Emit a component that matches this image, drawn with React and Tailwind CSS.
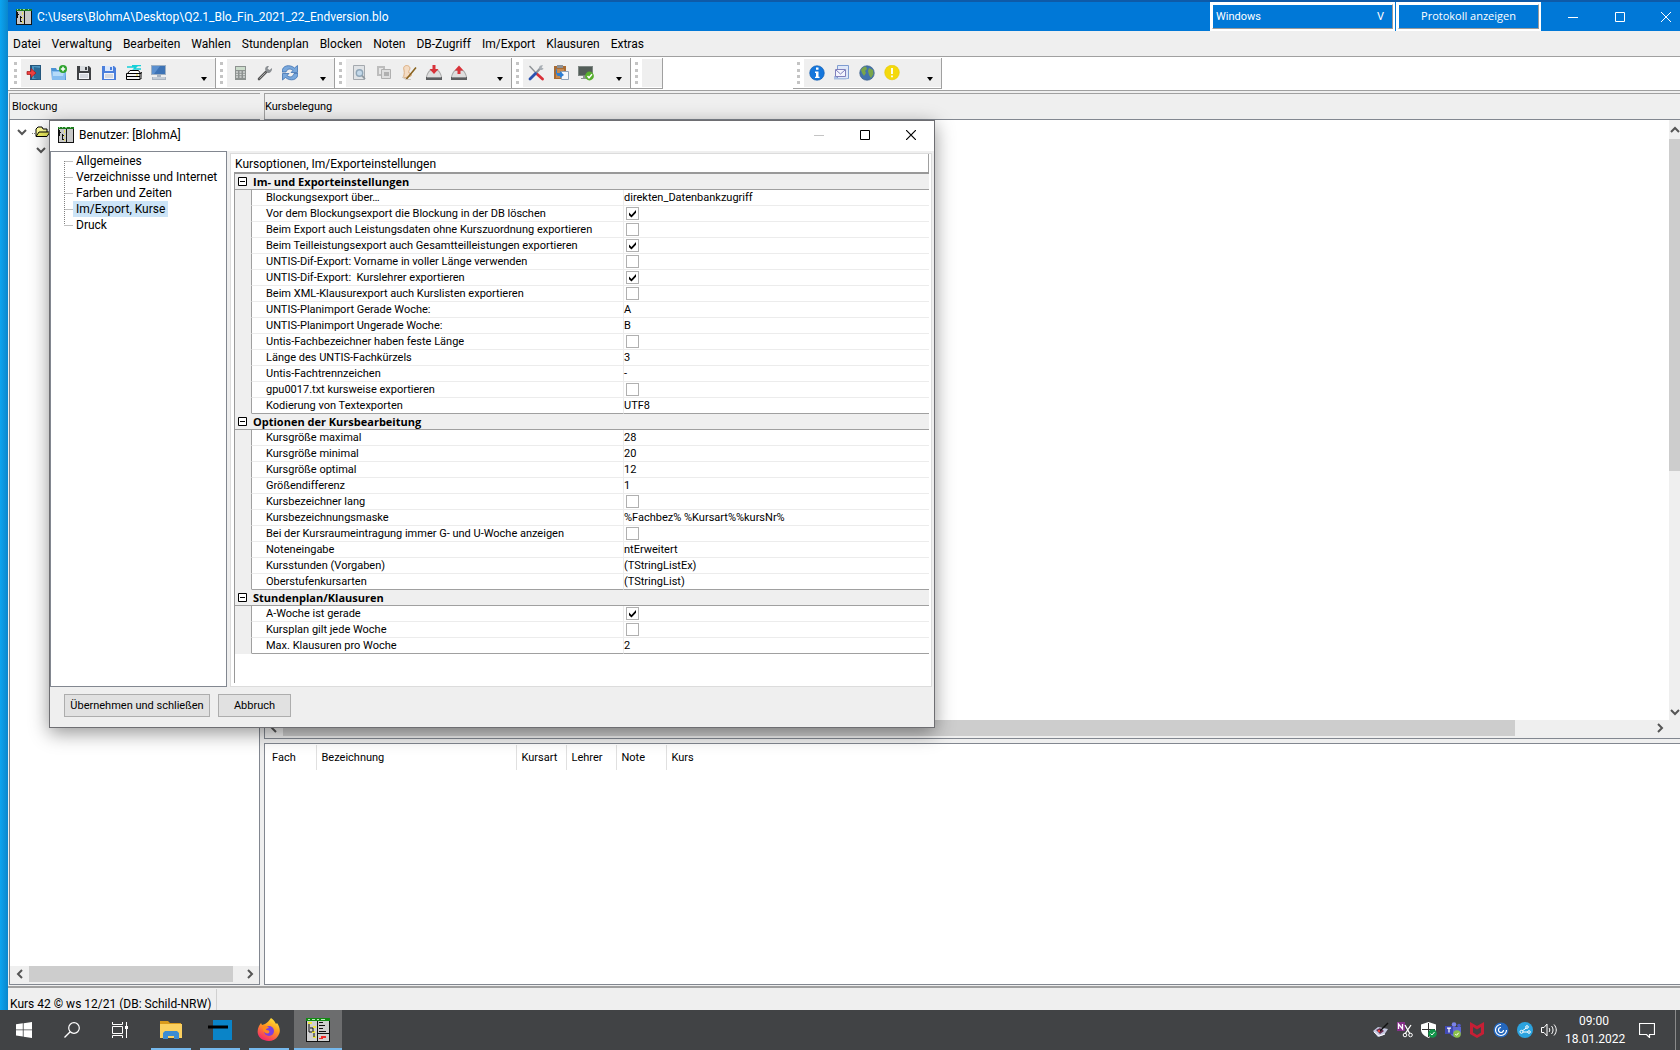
import React from "react";

const Svg = ({ size = 16, box = "0 0 16 16", children, className = "" }) => (
  <svg
    className={"shrink-0 " + className}
    width={size}
    height={size}
    viewBox={box}
    fill="none"
    aria-hidden="true"
  >
    {children}
  </svg>
);

const AppIcon = ({ size = 16 }) => (
  <Svg size={size}>
    <path d="M0 0h16v16H0z" fill="#111" />
    <path d="M1 2h7v13H1zM9 2h6v13H9z" fill="#c8c8c8" />
    <path d="M0 0h16v2H0z" fill="#1f7a1f" />
    <path d="M1 0h1v1H1zM4 0h1v1H4zM7 0h2v1H7zM12 0h1v1h-1z" fill="#8fe08f" />
    <path d="M6 3h1v3H6zM6 8h1v2H6zM6 12h1v2H6zM1 3h1v2H1z" fill="#e8e060" />
    <path d="M1 3h1v6H1zM1 5h2v1H1zM4 7h1v6H4zM4 8h2v1H4zM4 12h2v1H4z" fill="#111" />
  </Svg>
);

const AppIconLarge = () => (
  <Svg size={24} box="0 0 24 24">
    <path d="M0 0h24v24H0z" fill="#111" />
    <path d="M1 3h10v20H1zM12 3h11v20H12z" fill="#d0d0d0" />
    <path d="M0 0h24v3H0z" fill="#128a12" />
    <path d="M2 1h2v1H2zM6 1h3v1H6zM11 1h2v1h-2zM15 1h4v1h-4z" fill="#b8f0b8" />
    <path d="M2 4h4v2H2zM7 8h3v2H7zM6 13h3v2H6zM7 18h3v2H7z" fill="#eee83c" />
    <path d="M3 6v8h3M7 10v4M4 10h3M8 15v4" stroke="#111" />
    <path d="M13 4.5h4M13 7.5h6M13 10.5h4M13 13.5h7" stroke="#111" />
    <path d="M12 15.5h11" stroke="#111" />
    <path d="M15 18h5v2h-3v1h-4v-1h2z" fill="#f02828" />
  </Svg>
);

const ExitIcon = () => (
  <Svg>
    <path d="M4 0h11v15H4z" fill="#24567c" />
    <path d="M6 1h8v13H6z" fill="#4d94c0" />
    <path d="M8 2l6 1v12l-6-2z" fill="#2b6c98" />
    <path d="M1 6.500h4V3.500L10 8l-5 4.500v-3H1z" fill="#ee4040" stroke="#a01818" strokeWidth=".7" />
  </Svg>
);
const FolderAddIcon = () => (
  <Svg>
    <path d="M0 3h5l1 2h9v10H1z" fill="#4b92d4" />
    <path d="M1 6h14l-1 9H1z" fill="#86bdf0" />
    <path d="M2 7h11l-1 4H2z" fill="#b5daf9" />
    <circle cx="12" cy="4" r="4" fill="#2fa32f" />
    <path d="M12 1.800v4.400M9.800 4h4.400" stroke="#fff" strokeWidth="1.500" />
  </Svg>
);
const SaveIcon = ({ main, light }) => (
  <Svg>
    <path d="M1 1h12l2 2v12H1z" fill={main} />
    <path d="M4 1h8v5H4z" fill={light} />
    <path d="M9 2h2v3H9z" fill={main} />
    <path d="M3 8h10v6H3z" fill="#f2f4f8" />
    <path d="M4 10h8M4 12h8" stroke="#b7bcc4" />
  </Svg>
);
const PrinterIcon = () => (
  <Svg>
    <path d="M1 2h9l-2 2h7M6 .5h9" stroke="#16d0d8" strokeWidth="1.500" />
    <path d="M4 5.500h8.500l2 3H1.500z" fill="#fff" stroke="#000" />
    <path d="M.5 8.500h13.500v6H.5z" fill="#f2f2f2" stroke="#000" />
    <path d="M14 8.500l2-1v5l-2 2" stroke="#000" />
    <path d="M1 11.500h13" stroke="#000" />
    <path d="M10 10h2" stroke="#e5d430" />
  </Svg>
);
const MonitorIcon = () => (
  <Svg>
    <path d="M0 0h15v10H0z" fill="#9fb0c2" />
    <path d="M1 1h13v8H1z" fill="#3d73b6" />
    <path d="M1 1h8L3 9H1z" fill="#5b90cf" />
    <path d="M6 10h4v2H6zM1 12h14v3H1z" fill="#a8b3c0" />
    <path d="M2 13h12" stroke="#e0e6ec" />
  </Svg>
);
const CalcIcon = () => (
  <Svg>
    <path d="M3 1h11v14H3z" fill="#8d9290" />
    <path d="M4 2h9v3H4z" fill="#cbdccb" />
    <path d="M4 7h2M7.500 7h2M11 7h2M4 9.500h2M7.500 9.500h2M11 9.500h2M4 12h2M7.500 12h2M11 12h2" stroke="#d5d8d6" strokeWidth="1.500" />
  </Svg>
);
const WrenchIcon = () => (
  <Svg>
    <path d="M2 14l7-7" stroke="#555" strokeWidth="2.600" strokeLinecap="round" />
    <path d="M15 3l-2.500 2-2-1.500L12 1C9 .500 7.500 3 8.500 5.500L10.500 8C13 8.500 15.500 6 15 3z" fill="#8b8f93" />
    <path d="M2.500 13.500l6-6" stroke="#bbb" strokeWidth=".8" />
  </Svg>
);
const RefreshIcon = () => (
  <Svg>
    <path d="M0 7C0 0 8-1 12.500 3L15.500.5V7.500H9l2-2C8 3 5 4 4 7z" fill="#79a8dc" stroke="#2f66ab" strokeWidth=".7" />
    <path d="M16 8.500c0 7-8 8-12.500 4L.5 15V8.500H7l-2 2c3 2.500 6 1.500 7-2z" fill="#79a8dc" stroke="#2f66ab" strokeWidth=".7" />
  </Svg>
);
const PreviewIcon = () => (
  <Svg>
    <path d="M2.500.5h11v14h-11z" fill="#e0e3e6" stroke="#a4a9ae" />
    <circle cx="8.500" cy="8" r="3.200" fill="#c4d9ea" stroke="#8fa6b8" strokeWidth="1.400" />
    <path d="M11 10.500l3 3.500" stroke="#8f989f" strokeWidth="1.800" />
  </Svg>
);
const CopyIcon = () => (
  <Svg>
    <path d="M1 1h8v10H1z" fill="#bdbdbd" />
    <path d="M3 3h4v6H3z" fill="#e6e6e6" />
    <path d="M5.500 4.500h9v9h-9z" fill="#dedede" stroke="#b0b0b0" />
    <path d="M8 7h5v4H8z" fill="#b0b0b0" />
  </Svg>
);
const QuillIcon = () => (
  <Svg>
    <path d="M3 5C1 0 8-1 9 3c0 2-2 3-1 5 2 0 3 2 2 3l-7 2c-1-2 1-4 0-8z" fill="#f4dcc4" stroke="#dcae80" />
    <path d="M15 2.500L8 11l-3 3.500" stroke="#8a6420" strokeWidth="1.600" />
    <path d="M1 12l4 2.500h5" stroke="#d0c8c0" />
  </Svg>
);
const DriveIcon = ({ up }) => (
  <Svg>
    <path d="M4 5h8c2 1 4 5 4 8H0c0-3 2-7 4-8z" fill="#a9a9a9" />
    <path d="M4.500 6h7c2 1 3 4 3.500 6H1c.5-2 1.500-5 3.500-6z" fill="#dedede" />
    <path d="M0 12h16v3H0z" fill="#5c5e60" />
    <path d="M1 12h14v1H1z" fill="#8a8c8e" />
    <path d={up ? "M6.500 9V5.500H3.500L8 .5l4.500 5H9.500V9z" : "M6.500 0v4H3.500L8 9l4.500-5H9.500V0z"} fill="#d8333a" />
  </Svg>
);
const ToolsIcon = () => (
  <Svg>
    <path d="M1.500 1l7 7.500" stroke="#8e9296" strokeWidth="1.400" />
    <path d="M9 9l5.500 5" stroke="#d93038" strokeWidth="2.800" strokeLinecap="round" />
    <path d="M13 2.500L8 8" stroke="#8d949c" strokeWidth="2.200" />
    <path d="M11 2.500C11.500.5 13.500 0 15 .5L13.500 2.500 15.500 3.500C15 5 13 5.500 11.500 4.500z" fill="#a9afb5" />
    <path d="M7.500 8.500L2 14" stroke="#2a52b0" strokeWidth="2.800" strokeLinecap="round" />
  </Svg>
);
const PasteIcon = () => (
  <Svg>
    <path d="M1 1h12v13H1z" fill="#a96b32" />
    <path d="M4 0h6v3H4z" fill="#8c9197" />
    <path d="M3 4h8v9H3z" fill="#c68a50" />
    <path d="M8.500 6.500h7v8h-7z" fill="#f5f8fb" stroke="#8da2b8" />
    <path d="M4 3v5h3V6l4 4-4 3v-2H5C3 10 2 6 4 3z" fill="#2d7fd4" />
  </Svg>
);
const ScreenOkIcon = () => (
  <Svg>
    <path d="M0 1h15v10H0z" fill="#7d8682" />
    <path d="M1 2h13v8H1z" fill="#525d58" />
    <path d="M5 11h4v2h2v1H3v-1h2z" fill="#8b9490" />
    <circle cx="11.500" cy="11" r="4.400" fill="#57b02d" />
    <path d="M9.500 11l1.500 1.800 3-3.500" stroke="#fff" strokeWidth="1.400" />
  </Svg>
);
const InfoIcon = () => (
  <Svg>
    <circle cx="8" cy="8" r="7.300" fill="#1577dc" stroke="#0c58ac" strokeWidth=".6" />
    <path d="M7 2.500h2.500v2.300H7zM6 6.500h3.500v5.200h1V13H6v-1.300h1V8H6z" fill="#fff" />
  </Svg>
);
const MailIcon = () => (
  <Svg>
    <path d="M3.500.5h11v13h-11z" fill="#dfe8f8" stroke="#7f9cd0" />
    <path d="M0 14.500h12l2.500-1.500H3v-2H0z" fill="#a9bfe2" />
    <path d="M1.500 4.500h10v7h-10z" fill="#f3f4fd" stroke="#8080bc" />
    <path d="M2 5l4.500 4L11 5" stroke="#8080bc" />
  </Svg>
);
const GlobeIcon = () => (
  <Svg>
    <circle cx="8" cy="8" r="7.300" fill="#4273ac" stroke="#3b5c84" strokeWidth=".6" />
    <path d="M2 5c1-2 3-3.500 5-3.500L8 4 6 6l1 2-2 3-2-3zM10 3l4 2 .5 4-2.500 4-2-3-1-4z" fill="#7aa64a" />
  </Svg>
);
const HintIcon = () => (
  <Svg>
    <circle cx="8" cy="7.500" r="7.300" fill="#f4d90c" stroke="#e5c900" strokeWidth=".6" />
    <path d="M8 3v6M8 10.500v1.800" stroke="#fff" strokeWidth="1.800" />
  </Svg>
);

const DropMark = () => (
  <svg width="6" height="4" viewBox="0 0 6 4" aria-hidden="true">
    <path d="M0 0h6L3 4z" fill="#000" />
  </svg>
);

const Band = ({ icons, drop, width, className = "" }) => (
  <div
    className={
      "flex h-[31px] shrink-0 items-stretch border-r border-b border-[#a0a0a0] bg-white pl-[4px] " +
      width +
      " " +
      className
    }
  >
    <div className="my-[4px] mr-[4px] w-0 border-l-3 border-dotted border-[#c4c4c4]" />
    <div className="mt-[1px] mb-[1px] flex grow items-center justify-between bg-[#efefef] pr-[8px] pl-[5px]">
      <div className="flex gap-[9px]">
        {icons.map(([name, icon]) => (
          <button key={name} type="button" aria-label={name} className="size-[16px]">
            {icon}
          </button>
        ))}
      </div>
      {drop && (
        <button type="button" aria-label="Weitere Schaltflächen" className="mt-[12px]">
          <DropMark />
        </button>
      )}
    </div>
  </div>
);

const Chevron = ({ dir }) => {
  const d = {
    left: "M7 1L3 5l4 4",
    right: "M3 1l4 4-4 4",
    up: "M1 7l4-4 4 4",
    down: "M1 3l4 4 4-4",
  }[dir];
  return (
    <svg width="10" height="10" viewBox="0 0 10 10" fill="none" aria-hidden="true">
      <path d={d} stroke="#555" strokeWidth="2" />
    </svg>
  );
};

const menu = [
  "Datei", "Verwaltung", "Bearbeiten", "Wahlen", "Stundenplan", "Blocken",
  "Noten", "DB-Zugriff", "Im/Export", "Klausuren", "Extras",
];

const bandA = [
  ["Beenden", <ExitIcon />],
  ["Öffnen", <FolderAddIcon />],
  ["Speichern", <SaveIcon main="#3f4144" light="#d9dcdf" />],
  ["Speichern unter", <SaveIcon main="#4a7fdc" light="#dbe8fb" />],
  ["Drucken", <PrinterIcon />],
  ["Bildschirm", <MonitorIcon />],
];
const bandB = [
  ["Rechner", <CalcIcon />],
  ["Werkzeug", <WrenchIcon />],
  ["Aktualisieren", <RefreshIcon />],
];
const bandC = [
  ["Vorschau", <PreviewIcon />],
  ["Kopieren", <CopyIcon />],
  ["Notiz", <QuillIcon />],
  ["Importieren", <DriveIcon />],
  ["Exportieren", <DriveIcon up />],
];
const bandD = [
  ["Einstellungen", <ToolsIcon />],
  ["Einfügen", <PasteIcon />],
  ["Prüfen", <ScreenOkIcon />],
];
const bandE = [
  ["Info", <InfoIcon />],
  ["Nachricht", <MailIcon />],
  ["Internet", <GlobeIcon />],
  ["Hinweis", <HintIcon />],
];

const groups = [
  {
    title: "Im- und Exporteinstellungen",
    rows: [
      ["Blockungsexport über…", "direkten_Datenbankzugriff"],
      ["Vor dem Blockungsexport die Blockung in der DB löschen", true],
      ["Beim Export auch Leistungsdaten ohne Kurszuordnung exportieren", false],
      ["Beim Teilleistungsexport auch Gesamtteilleistungen exportieren", true],
      ["UNTIS-Dif-Export: Vorname in voller Länge verwenden", false],
      ["UNTIS-Dif-Export:  Kurslehrer exportieren", true],
      ["Beim XML-Klausurexport auch Kurslisten exportieren", false],
      ["UNTIS-Planimport Gerade Woche:", "A"],
      ["UNTIS-Planimport Ungerade Woche:", "B"],
      ["Untis-Fachbezeichner haben feste Länge", false],
      ["Länge des UNTIS-Fachkürzels", "3"],
      ["Untis-Fachtrennzeichen", "-"],
      ["gpu0017.txt kursweise exportieren", false],
      ["Kodierung von Textexporten", "UTF8"],
    ],
  },
  {
    title: "Optionen der Kursbearbeitung",
    rows: [
      ["Kursgröße maximal", "28"],
      ["Kursgröße minimal", "20"],
      ["Kursgröße optimal", "12"],
      ["Größendifferenz", "1"],
      ["Kursbezeichner lang", false],
      ["Kursbezeichnungsmaske", "%Fachbez% %Kursart%%kursNr%"],
      ["Bei der Kursraumeintragung immer G- und U-Woche anzeigen", false],
      ["Noteneingabe", "ntErweitert"],
      ["Kursstunden (Vorgaben)", "(TStringListEx)"],
      ["Oberstufenkursarten", "(TStringList)"],
    ],
  },
  {
    title: "Stundenplan/Klausuren",
    rows: [
      ["A-Woche ist gerade", true],
      ["Kursplan gilt jede Woche", false],
      ["Max. Klausuren pro Woche", "2"],
    ],
  },
];

const CheckBox = ({ id, checked }) => (
  <span className="grid size-[13px]">
    <input
      id={id}
      type="checkbox"
      defaultChecked={checked}
      className="peer col-start-1 row-start-1 size-[13px] appearance-none border border-[#b0b0b0] bg-white"
    />
    <svg
      viewBox="0 0 13 13"
      className="pointer-events-none col-start-1 row-start-1 hidden size-[13px] peer-checked:block"
      aria-hidden="true"
    >
      <path d="M3 5.500l2.500 2.500L10 3v2.800L5.500 10.500 3 8.200z" fill="#000" />
    </svg>
  </span>
);

const PropertyTable = () => (
  <table className="w-full table-fixed border-separate border-spacing-0 text-[11px] leading-[14px]">
    <colgroup>
      <col className="w-[17px]" />
      <col className="w-[372px]" />
      <col />
    </colgroup>
    {groups.map((g, gi) => (
      <tbody key={g.title}>
        <tr className="h-[16px] bg-[#efefef]">
          <th colSpan={3} scope="colgroup" className="border-b border-[#a0a0a0] p-0 text-left">
            <button
              type="button"
              aria-expanded="true"
              className="flex h-[15px] items-center gap-[6px] pl-[3px] font-['Open_Sans',sans-serif] font-bold"
            >
              <svg width="9" height="9" viewBox="0 0 9 9" aria-hidden="true">
                <path d="M.5.500h8v8h-8z" fill="#fff" stroke="#000" />
                <path d="M2 4.500h5" stroke="#000" />
              </svg>
              {g.title}
            </button>
          </th>
        </tr>
        {g.rows.map(([label, value], i) => {
          const id = "opt-" + gi + "-" + i;
          const line = i === g.rows.length - 1 ? " border-b-[#a0a0a0]" : " border-b-[#ececec]";
          return (
            <tr key={label} className="h-[16px]">
              <td className={"border-r border-b border-r-[#a0a0a0] border-b-[#efefef] bg-[#efefef] p-0"} />
              <th
                scope="row"
                className={"border-r border-b border-r-[#ececec] p-0 pt-[1px] pl-[14px] text-left font-normal whitespace-pre" + line}
              >
                {typeof value === "boolean" ? <label htmlFor={id}>{label}</label> : label}
              </th>
              {typeof value === "boolean" ? (
                <td className={"border-b p-0 pl-[2px]" + line}>
                  <CheckBox id={id} checked={value} />
                </td>
              ) : (
                <td className={"border-b p-0 pt-[1px] whitespace-pre" + line}>{value}</td>
              )}
            </tr>
          );
        })}
      </tbody>
    ))}
  </table>
);

const tree = ["Allgemeines", "Verzeichnisse und Internet", "Farben und Zeiten", "Im/Export, Kurse", "Druck"];

const Dialog = () => (
  <section
    role="dialog"
    aria-label="Benutzer: [BlohmA]"
    className="absolute top-[120px] left-[49px] flex h-[608px] w-[886px] flex-col border border-[#6e6e72] bg-[#efefef] shadow-[0_5px_18px_rgba(0,0,0,0.42)]"
  >
    <header className="flex h-[30px] shrink-0 items-center bg-white pb-[2px] pl-[8px]">
      <AppIcon />
      <h2 className="ml-[5px] grow text-[12px]">Benutzer: [BlohmA]</h2>
      <button type="button" aria-label="Minimieren" disabled className="grid w-[46px] place-items-center">
        <svg width="10" height="10" viewBox="0 0 10 10"><path d="M0 5.500h10" stroke="#c4c4c4" /></svg>
      </button>
      <button type="button" aria-label="Maximieren" className="grid w-[46px] place-items-center">
        <svg width="10" height="10" viewBox="0 0 10 10" fill="none"><path d="M.5.500h9v9h-9z" stroke="#000" /></svg>
      </button>
      <button type="button" aria-label="Schließen" className="grid w-[46px] place-items-center">
        <svg width="10" height="10" viewBox="0 0 10 10"><path d="M0 0l10 10M10 0L0 10" stroke="#000" strokeWidth="1.200" /></svg>
      </button>
    </header>
    <div className="flex min-h-0 grow gap-[3px] pr-[2px]">
      <ul className="w-[177px] shrink-0 border border-[#828790] bg-white pt-[1px] pl-[13px]">
        {tree.map((t, i) => (
          <li key={t} className="flex h-[16px] items-center">
            <svg className="shrink-0" width="9" height="16" viewBox="0 0 9 16" aria-hidden="true">
              <path
                d={i === 0 ? "M.5 8v8M.5 8.500h9" : i === 4 ? "M.5 0v8M.5 8.500h9" : "M.5 0v16M.5 8.500h9"}
                stroke="#808080"
                strokeDasharray="1 1"
              />
            </svg>
            <button
              type="button"
              className={"h-[16px] px-[3px] text-[12px] leading-[16px] whitespace-nowrap " + (i === 3 ? "bg-[#cce4f7]" : "")}
            >
              {t}
            </button>
          </li>
        ))}
      </ul>
      <div className="mt-[2px] flex grow flex-col border border-[#dcdcdc] bg-white pr-[2px] pb-[3px] pl-[3px]">
        <h3 className="h-[18px] border-r border-[#a0a0a0] pt-[3px] pl-[1px] text-[12px] leading-[15px]">
          Kursoptionen, Im/Exporteinstellungen
        </h3>
        <div className="grow border-t-2 border-l border-[#999]">
          <PropertyTable />
        </div>
      </div>
    </div>
    <footer className="flex h-[40px] shrink-0 items-start gap-[8px] pt-[7px] pl-[14px] text-[11px]">
      <button type="button" className="h-[23px] w-[146px] border border-[#adadad] bg-[#e1e1e1] pt-[1px]">
        Übernehmen und schließen
      </button>
      <button type="button" className="h-[23px] w-[73px] border border-[#adadad] bg-[#e1e1e1] pt-[1px]">
        Abbruch
      </button>
    </footer>
  </section>
);

const Header = ({ children, className }) => (
  <h2 className={"h-[26px] border-t border-l border-[#a0a0a0] bg-[#efefef] pt-[4px] text-[11px] leading-[17px] " + className}>
    {children}
  </h2>
);

const MainWindow = () => (
  <main className="flex min-w-0 grow flex-col bg-[#efefef]">
    <header className="flex h-[31px] shrink-0 items-center border-t-2 border-[#0e5aa8] bg-[#0078d7] pl-[8px] text-[12px] text-white">
      <AppIcon />
      <h1 className="ml-[5px] grow">C:\Users\BlohmA\Desktop\Q2.1_Blo_Fin_2021_22_Endversion.blo</h1>
      <div className="mr-[1px] grid h-[29px] w-[185px] border-2 border-white bg-[#0078d7]">
        <select
          aria-label="Fenster"
          className="col-start-1 row-start-1 w-full appearance-none border border-[#9a9a9a] border-t-white border-l-white pt-[2px] pl-[3px] text-[11px]"
        >
          <option>Windows</option>
        </select>
        <span className="pointer-events-none col-start-1 row-start-1 mr-[9px] self-center justify-self-end pt-[1px] text-[11px]">V</span>
      </div>
      <div className="mr-[9px] h-[29px] w-[145px] border-2 border-white">
        <button
          type="button"
          className="size-full border border-[#9a9a9a] border-t-white border-l-white font-['Open_Sans',sans-serif] text-[11px]"
        >
          Protokoll anzeigen
        </button>
      </div>
      <button type="button" aria-label="Minimieren" className="grid w-[46px] place-items-center">
        <svg width="10" height="10" viewBox="0 0 10 10"><path d="M0 5.500h10" stroke="#fff" /></svg>
      </button>
      <button type="button" aria-label="Verkleinern" className="grid w-[47px] place-items-center">
        <svg width="10" height="10" viewBox="0 0 10 10" fill="none"><path d="M.5.500h9v9h-9z" stroke="#fff" /></svg>
      </button>
      <button type="button" aria-label="Schließen" className="mr-[-9px] grid w-[46px] place-items-center">
        <svg width="10" height="10" viewBox="0 0 10 10"><path d="M0 0l10 10M10 0L0 10" stroke="#fff" /></svg>
      </button>
    </header>

    <nav className="flex h-[25px] shrink-0 items-center gap-[11px] pl-[5px] text-[12px]">
      {menu.map((m) => (
        <button key={m} type="button">{m}</button>
      ))}
    </nav>

    <div className="flex h-[35px] shrink-0 border-y border-[#a0a0a0] bg-white pt-[1px] pl-[2px]">
      <Band icons={bandA} drop width="w-[206px]" />
      <Band icons={bandB} drop width="w-[119px]" />
      <Band icons={bandC} drop width="w-[177px]" />
      <Band icons={bandD} drop width="w-[119px]" />
      <Band icons={[]} width="w-[32px]" />
      <Band icons={bandE} drop width="w-[149px]" className="ml-[130px]" />
    </div>

    <div className="flex grow gap-[4px] pt-[2px] pl-[1px]">
      <section className="flex w-[251px] shrink-0 flex-col">
        <Header className="pl-[2px]">Blockung</Header>
        <div className="flex grow flex-col border border-[#828790] bg-white">
          <div className="grow pt-[3px] text-[#555]">
            <div className="flex h-[18px] items-center pl-[7px]">
              <button type="button" aria-label="Knoten zuklappen"><Chevron dir="down" /></button>
              <svg className="ml-[5px]" width="18" height="12" viewBox="0 0 18 12" fill="none" aria-hidden="true">
                <path d="M0 7.500h1M2 7.500h1" stroke="#808080" />
                <path d="M4 10V3l2-2h4l1 2h4v3" fill="#ffff99" stroke="#000" />
                <path d="M4 10.500L7 6h11l-3 4.500z" fill="#f0f060" stroke="#000" />
              </svg>
            </div>
            <button type="button" aria-label="Unterknoten zuklappen" className="ml-[26px] block h-[18px]"><Chevron dir="down" /></button>
          </div>
          <div className="flex h-[18px] shrink-0 items-start bg-[#efefef] pl-[1px]">
            <button type="button" aria-label="Nach links" className="grid h-[16px] w-[18px] place-items-center"><Chevron dir="left" /></button>
            <div className="h-[16px] w-[204px] bg-[#cdcdcd]" />
            <button type="button" aria-label="Nach rechts" className="ml-auto grid h-[16px] w-[18px] place-items-center"><Chevron dir="right" /></button>
          </div>
        </div>
      </section>

      <section className="flex min-w-0 grow flex-col">
        <Header className="">Kursbelegung</Header>
        <div className="flex h-[620px] flex-col border border-r-0 border-[#828790] bg-white">
          <div className="flex grow">
            <div className="grow" />
            <div className="flex w-[11px] shrink-0 flex-col overflow-hidden bg-[#efefef]">
              <button type="button" aria-label="Nach oben" className="grid h-[19px] place-items-center"><Chevron dir="up" /></button>
              <div className="h-[332px] bg-[#cdcdcd]" />
              <button type="button" aria-label="Nach unten" className="mt-auto grid h-[17px] place-items-center"><Chevron dir="down" /></button>
            </div>
          </div>
          <div className="flex h-[18px] shrink-0 items-start bg-[#efefef] pr-[11px]">
            <button type="button" aria-label="Nach links" className="grid h-[16px] w-[18px] place-items-center"><Chevron dir="left" /></button>
            <div className="mr-[140px] h-[16px] grow bg-[#cdcdcd]" />
            <button type="button" aria-label="Nach rechts" className="mr-[4px] h-[16px]"><Chevron dir="right" /></button>
          </div>
        </div>
        <div className="mt-[4px] grow border border-r-0 border-[#828790] bg-white pt-[1px]">
          <table className="table-fixed text-[11px]">
            <thead>
              <tr className="h-[25px] text-left">
                <th className="w-[51px] border-r border-[#e0e0e0] p-0 pt-[1px] pl-[7px] font-normal">Fach</th>
                <th className="w-[200px] border-r border-[#e0e0e0] p-0 pt-[1px] pl-[5px] font-normal">Bezeichnung</th>
                <th className="w-[50px] border-r border-[#e0e0e0] p-0 pt-[1px] pl-[5px] font-normal">Kursart</th>
                <th className="w-[50px] border-r border-[#e0e0e0] p-0 pt-[1px] pl-[5px] font-normal">Lehrer</th>
                <th className="w-[50px] border-r border-[#e0e0e0] p-0 pt-[1px] pl-[5px] font-normal">Note</th>
                <th className="w-[50px] p-0 pt-[1px] pl-[5px] font-normal">Kurs</th>
              </tr>
            </thead>
          </table>
        </div>
      </section>
    </div>

    <footer className="mt-[1px] flex h-[24px] shrink-0 border-t-2 border-[#a0a0a0] text-[12px]">
      <p className="mt-[1px] w-[209px] overflow-hidden border-r border-[#d0d0d0] pt-[8px] pl-[2px] leading-[14px] whitespace-nowrap">
        Kurs 42 © ws 12/21 (DB: Schild-NRW)
      </p>
    </footer>
  </main>
);

const Task = ({ name, active, width = "w-[40px]", children }) => (
  <button
    type="button"
    aria-label={name}
    className={
      "grid h-[40px] place-items-center border-b-2 border-[#76b9ed] pt-[1px] " + width + (active ? " bg-[#6c6d6e]" : "")
    }
  >
    {children}
  </button>
);

const Taskbar = () => (
  <footer className="flex h-[40px] shrink-0 items-center bg-[#414345] text-white">
    <button type="button" aria-label="Start" className="grid w-[48px] place-items-center">
      <Svg><path d="M0 2.300l6.800-1v6.200H0zM7.600 1.200L16 0v7.500H7.600zM0 8.300h6.800v6.300l-6.800-1zM7.600 8.300H16V16l-8.400-1.200z" fill="#fff" /></Svg>
    </button>
    <button type="button" aria-label="Suchen" className="grid w-[48px] place-items-center">
      <Svg><circle cx="10" cy="6" r="5.300" stroke="#fff" strokeWidth="1.200" /><path d="M6.200 9.800L.5 15.500" stroke="#fff" strokeWidth="1.300" /></Svg>
    </button>
    <button type="button" aria-label="Taskansicht" className="mr-[7px] grid w-[48px] place-items-center">
      <Svg><path d="M.5 0v2.500h10V0M.5 16v-2.500h10V16M.5 4.500h10v7H.5zM14.500 0v16" stroke="#fff" /><path d="M13 4h3v3h-3z" fill="#fff" /></Svg>
    </button>
    <div className="flex gap-[9px]">
      <Task name="Explorer">
        <svg width="22" height="18" viewBox="0 0 22 18" aria-hidden="true">
          <path d="M0 0h8l2 2h11v5H0z" fill="#d99a1c" />
          <path d="M0 3h22v14H0z" fill="#fbd05f" />
          <path d="M3 18v-6l2-2h12l2 2v6h-5v-3H8v3z" fill="#3c8cd2" />
        </svg>
      </Task>
      <Task name="Anwendung">
        <svg width="24" height="20" viewBox="0 0 24 20" aria-hidden="true">
          <path d="M5 0h19v20H5z" fill="#0a84c8" />
          <path d="M0 5.500h20v3H0z" fill="#000" />
        </svg>
      </Task>
      <Task name="Firefox">
        <svg width="24" height="24" viewBox="0 0 24 24" aria-hidden="true">
          <defs>
            <linearGradient id="fx" x1=".8" y1="0" x2=".3" y2="1">
              <stop offset="0" stopColor="#ffe93b" />
              <stop offset=".45" stopColor="#ff9a1f" />
              <stop offset="1" stopColor="#f5226e" />
            </linearGradient>
          </defs>
          <path d="M14 0c3 2 4 4 5 6l1-1c3 4 4 9 1 13-3 5-9 6-14 4C1 20-1 14 2 8l2-3 1 2 3-1c2-1 4-3 6-6z" fill="url(#fx)" />
          <circle cx="12" cy="13" r="5" fill="#7b3fe0" />
          <path d="M5 8c3-1 6 0 7 2-2 0-3 1-3 2 3 0 4 1 3 3-2 1-5 0-6-3z" fill="#ff8a1c" />
        </svg>
      </Task>
    </div>
    <div className="ml-[5px]">
      <Task name="Kurs 42" active width="w-[48px]"><AppIconLarge /></Task>
    </div>

    <div className="ml-auto flex items-center gap-[8px]">
      <Svg>
        <path d="M0 9l5-4 10 2-4 6-6 2z" fill="#c4c8e0" />
        <path d="M3 8l4-2 4 3-4 3z" fill="#6a3050" />
        <path d="M6 9L14.500.5l1 1L7.500 9.500z" fill="#111" />
        <path d="M1 10l5 4 6-2" stroke="#fff" />
        <path d="M5 8h2v2H5z" fill="#e04040" />
      </Svg>
      <Svg>
        <path d="M0 0h8v9H0z" fill="#86308a" />
        <path d="M1.500 7V2l4 5V2" stroke="#fff" strokeWidth="1.300" />
        <path d="M8 3l5 9M14 3L8 12" stroke="#fff" strokeWidth="1.300" />
        <circle cx="8" cy="13" r="1.800" stroke="#fff" /><circle cx="13.500" cy="13" r="1.800" stroke="#fff" />
      </Svg>
      <Svg>
        <path d="M7.500 0L15 2.500V8c0 3.500-4 6.500-7.500 8C4 14.500 0 11.500 0 8V2.500z" fill="#fff" />
        <path d="M7.500 1v14M1 7.500h13" stroke="#333" />
        <circle cx="11.500" cy="11.500" r="4.300" fill="#12954a" />
        <path d="M9.500 11.500l1.500 1.500 2.500-3" stroke="#fff" />
      </Svg>
      <Svg>
        <circle cx="9" cy="2.500" r="2.300" fill="#7b83eb" /><circle cx="14" cy="3.500" r="1.800" fill="#5059c9" />
        <path d="M5 5h11v5c0 3-2 5-5 5s-6-2-6-5z" fill="#5e66d4" />
        <path d="M0 4h8v8H0z" fill="#4049b5" />
        <path d="M2 6.200h4M4 6v4.500" stroke="#fff" strokeWidth="1.200" />
        <circle cx="12" cy="12" r="3.800" fill="#8cc04a" />
        <path d="M10.300 12l1.300 1.300 2-2.500" stroke="#fff" />
      </Svg>
      <Svg><path d="M1 0l7 4 7-4v12l-7 4-7-4zM4 5v5.500L8 13l4-2.500V5L8 7.500z" fill="#c61f35" fillRule="evenodd" /></Svg>
      <Svg>
        <circle cx="8" cy="8" r="7.500" fill="#2467bd" />
        <path d="M8 2.500A5.500 5.500 0 1013.500 8M8 5.500A2.500 2.500 0 108 10.500A2.500 2.500 0 0010.500 8" stroke="#fff" strokeWidth="1.200" />
      </Svg>
      <Svg>
        <circle cx="8" cy="8" r="8" fill="#2ba3df" />
        <path d="M4.500 9.500L10 5.500M4.500 10h7" stroke="#fff" />
        <circle cx="4.500" cy="9.800" r="1.500" fill="#2ba3df" stroke="#fff" /><circle cx="10" cy="5" r="1.300" fill="#2ba3df" stroke="#fff" /><circle cx="12" cy="10" r="1.300" fill="#2ba3df" stroke="#fff" />
      </Svg>
      <Svg>
        <path d="M.5 5.500h2.500l3-3.500v12L3 10.500H.500z" stroke="#fff" />
        <path d="M8 6c1 1 1 3 0 4M10.500 4c2 2.500 2 5.500 0 8M13 2.500c3 3.500 3 7.500 0 11" stroke="#fff" />
      </Svg>
    </div>
    <time className="ml-[8px] w-[58px] text-center text-[12px] leading-[18px]" dateTime="2022-01-18T09:00">
      09:00<br />18.01.2022
    </time>
    <button type="button" aria-label="Benachrichtigungen" className="mr-[15px] ml-[16px]">
      <Svg><path d="M.5 1.500h15v11h-5v3l-3-3h-7z" stroke="#fff" strokeWidth="1.200" /></Svg>
    </button>
    <div className="mr-[4px] ml-[5px] h-[40px] border-l border-[#8a8a8a]" />
  </footer>
);

export default function App() {
  return (
    <div className="relative flex min-h-screen flex-col overflow-hidden bg-[#0a9fee] font-[Roboto,sans-serif] text-black">
      <div className="flex grow">
        <div className="w-[8px] shrink-0 bg-linear-to-r from-[#0ba4f0] to-[#0a86cc]" />
        <MainWindow />
      </div>
      <Taskbar />
      <Dialog />
    </div>
  );
}
